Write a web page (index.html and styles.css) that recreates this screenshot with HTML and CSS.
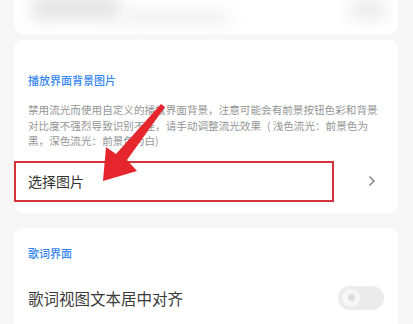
FILE: index.html
```html
<!DOCTYPE html>
<html lang="zh-CN">
<head>
<meta charset="utf-8">
<link rel="stylesheet" href="styles.css">
</head>
<body>
<div class="page">
  <div class="card card-top">
    <div class="blob blob-a"></div>
    <div class="blob blob-b"></div>
    <div class="spacer"></div>
    <div class="blob blob-c"></div>
  </div>

  <div class="card card-bg">
    <div class="section-title">播放界面背景图片</div>
    <div class="desc">禁用流光而使用自定义的播放界面背景，注意可能会有前景按钮色彩和背景<br>对比度不强烈导致识别不佳，请手动调整流光效果<span class="paren">(</span>浅色流光：前景色为<br>黑，深色流光：前景色为白)</div>
    <div class="row row-pick">
      <span class="row-label">选择图片</span>
      <svg class="chev" width="8" height="12" viewBox="0 0 8 12"><path d="M1.5 1.5 L6 6 L1.5 10.5" fill="none" stroke="#777" stroke-width="1.3"/></svg>
      <div class="highlight"></div>
    </div>
  </div>

  <div class="card card-lyric">
    <div class="section-title">歌词界面</div>
    <div class="row row-toggle">
      <span class="row-label">歌词视图文本居中对齐</span>
      <div class="toggle"><div class="knob"><div class="dot"></div></div></div>
    </div>
  </div>

  <svg class="arrow" width="413" height="324" viewBox="0 0 413 324">
    <path d="M161 104 L165 107 L127 160 L137 171 L103 181 L106 147 L116 154 Z" fill="#e5262c"/>
  </svg>
</div>
</body>
</html>
```

FILE: styles.css
```css
* { box-sizing: border-box; }
html, body {
  margin: 0;
  padding: 0;
  background: #f6f6f6;
  font-family: "Noto Sans CJK SC", "Noto Sans", sans-serif;
}
.page {
  position: relative;
  width: 413px;
  height: 324px;
  overflow: hidden;
  padding: 0 15px 0 14px;
  display: flex;
  flex-direction: column;
}
.card {
  background: #fff;
  border-radius: 9px;
  flex-shrink: 0;
}
.card-top {
  height: 34px;
  border-radius: 0 0 9px 9px;
  display: flex;
  align-items: flex-start;
  padding: 0 10px 0 16px;
  overflow: hidden;
}
.blob {
  filter: blur(8px);
  border-radius: 12px;
}
.blob-a {
  width: 92px;
  height: 24px;
  background: #e3e3e3;
  margin-top: -4px;
}
.blob-b {
  width: 110px;
  height: 16px;
  background: #f1f1f1;
  margin-top: 10px;
}
.spacer { flex: 1; }
.blob-c {
  width: 40px;
  height: 22px;
  background: #ececec;
  margin-top: -2px;
}
.card-bg {
  margin-top: 6px;
  padding: 33px 0 11px 0;
}
.section-title {
  padding-left: 14px;
  font-size: 11px;
  line-height: 14px;
  font-weight: 500;
  color: #3485f0;
}
.desc {
  margin-top: 15px;
  padding-left: 14px;
  font-size: 10.6px;
  line-height: 15.5px;
  color: #959595;
  white-space: nowrap;
}
.paren { margin: 0 2px 0 6px; }
.row {
  display: flex;
  align-items: center;
  justify-content: space-between;
  position: relative;
}
.row-pick {
  margin-top: 12px;
  height: 41px;
  padding: 0 22px 0 14px;
}
.row-label {
  font-size: 14px;
  color: #333;
}
.highlight {
  position: absolute;
  left: 0;
  top: 0;
  width: 320px;
  height: 41px;
  border: 2px solid #d3343b;
}
.card-lyric {
  margin-top: 15px;
  padding: 18px 0 0 0;
  flex: 1;
  border-radius: 9px 9px 0 0;
}
.row-toggle {
  margin-top: 16px;
  height: 44px;
  padding: 0 14px 0 14px;
}
.row-toggle .row-label {
  font-size: 15.5px;
  color: #3a3a3a;
}
.toggle {
  width: 46px;
  height: 24px;
  border-radius: 12px;
  background: #ebebeb;
  display: flex;
  align-items: center;
  padding-left: 4px;
}
.knob {
  width: 18px;
  height: 18px;
  border-radius: 50%;
  background: #f6f6f6;
  display: flex;
  align-items: center;
  justify-content: center;
}
.dot {
  width: 7px;
  height: 7px;
  border-radius: 50%;
  background: #dcdcdc;
}
.arrow {
  position: absolute;
  left: 0;
  top: 0;
  pointer-events: none;
}
```
